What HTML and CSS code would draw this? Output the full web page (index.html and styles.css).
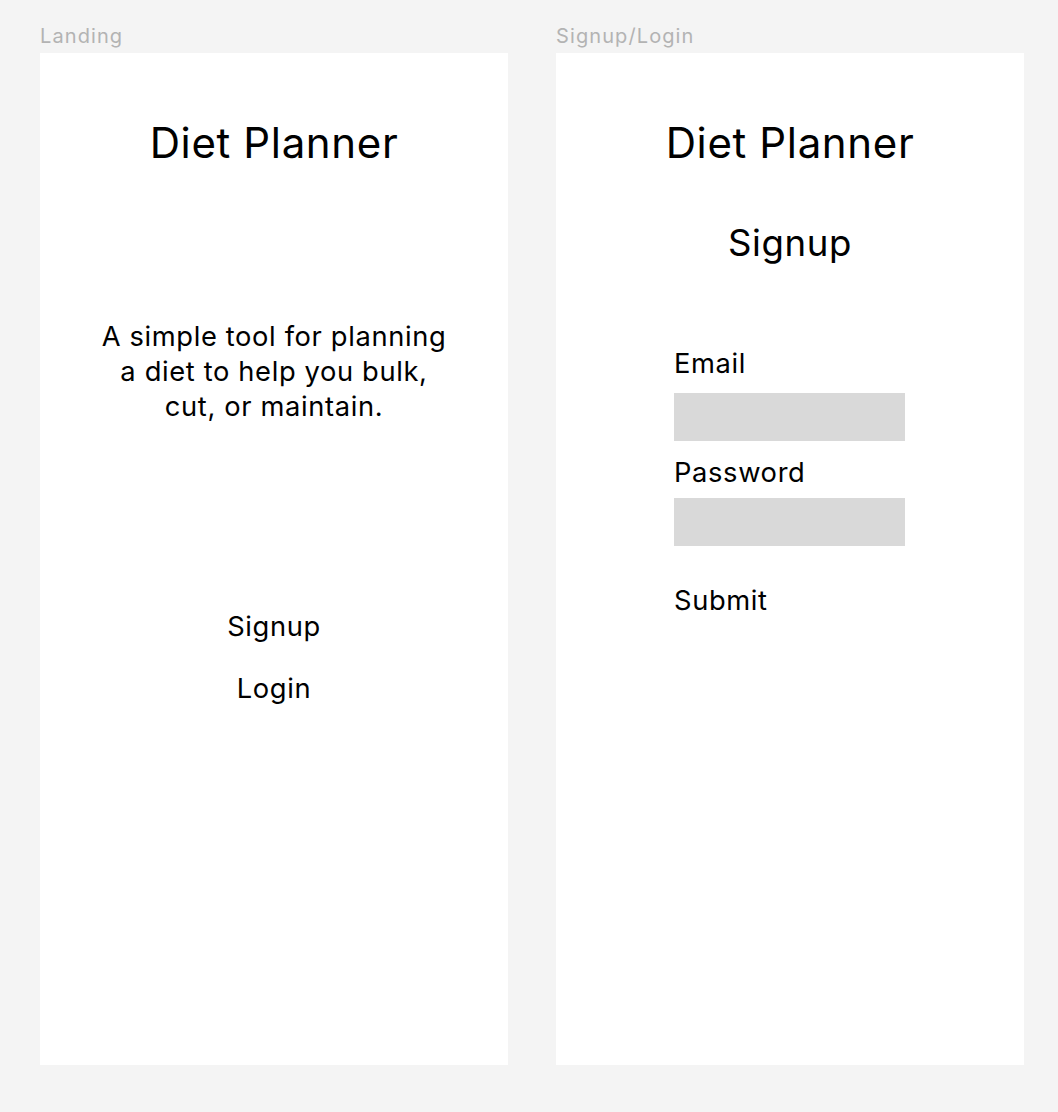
FILE: index.html
```html
<!DOCTYPE html>
<html lang="en">
<head>
<meta charset="utf-8">
<title>Diet Planner wireframes</title>
<link rel="stylesheet" href="styles.css">
</head>
<body>
<div class="canvas">
  <section class="board">
    <div class="board-label">Landing</div>
    <div class="frame landing">
      <h1 class="app-title">Diet Planner</h1>
      <p class="tagline">A simple tool for planning<br>a diet to help you bulk,<br>cut, or maintain.</p>
      <nav class="actions">
        <a class="action">Signup</a>
        <a class="action">Login</a>
      </nav>
    </div>
  </section>
  <section class="board">
    <div class="board-label">Signup/Login</div>
    <div class="frame auth">
      <h1 class="app-title">Diet Planner</h1>
      <h2 class="auth-title">Signup</h2>
      <form class="auth-form">
        <label class="field-label">Email</label>
        <div class="field-box email-box"></div>
        <label class="field-label pw">Password</label>
        <div class="field-box pw-box"></div>
        <div class="submit">Submit</div>
      </form>
    </div>
  </section>
</div>
</body>
</html>
```

FILE: styles.css
```css
* { box-sizing: border-box; }
html, body {
  margin: 0;
  padding: 0;
  background: #f4f4f4;
  font-family: Inter, "Liberation Sans", sans-serif;
  color: #000;
}
.canvas {
  display: flex;
  gap: 48px;
  padding: 24px 0 0 40px;
}
.board {
  width: 468px;
  flex-shrink: 0;
  display: flex;
  flex-direction: column;
}
.board-label {
  font-size: 20px;
  line-height: 24px;
  height: 29px;
  color: #b3b3b3;
  letter-spacing: 0.055em;
}
.frame {
  background: #fff;
  height: 1012px;
  display: flex;
  flex-direction: column;
  letter-spacing: 0.04em;
}
.app-title {
  margin: 0;
  font-weight: 400;
  font-size: 42px;
  line-height: 48px;
  text-align: center;
  padding-top: 66px;
}
.tagline {
  margin: 0;
  text-align: center;
  font-size: 27.3px;
  line-height: 35px;
  padding-top: 152px;
}
.actions {
  display: flex;
  flex-direction: column;
  align-items: center;
  gap: 31px;
  padding-top: 187px;
}
.action {
  font-size: 27.3px;
  line-height: 31px;
}
.auth-title {
  margin: 0;
  font-weight: 400;
  font-size: 36.6px;
  line-height: 42px;
  text-align: center;
  padding-top: 55px;
}
.auth-form {
  display: flex;
  flex-direction: column;
  padding: 84px 0 0 118px;
}
.field-label {
  font-size: 27.3px;
  line-height: 32px;
}
.field-label.pw { margin-top: 16px; }
.field-box {
  width: 231px;
  height: 48px;
  background: #d9d9d9;
}
.email-box { margin-top: 13px; }
.pw-box { margin-top: 9px; }
.submit {
  font-size: 27.3px;
  line-height: 32px;
  margin-top: 39px;
}
```
